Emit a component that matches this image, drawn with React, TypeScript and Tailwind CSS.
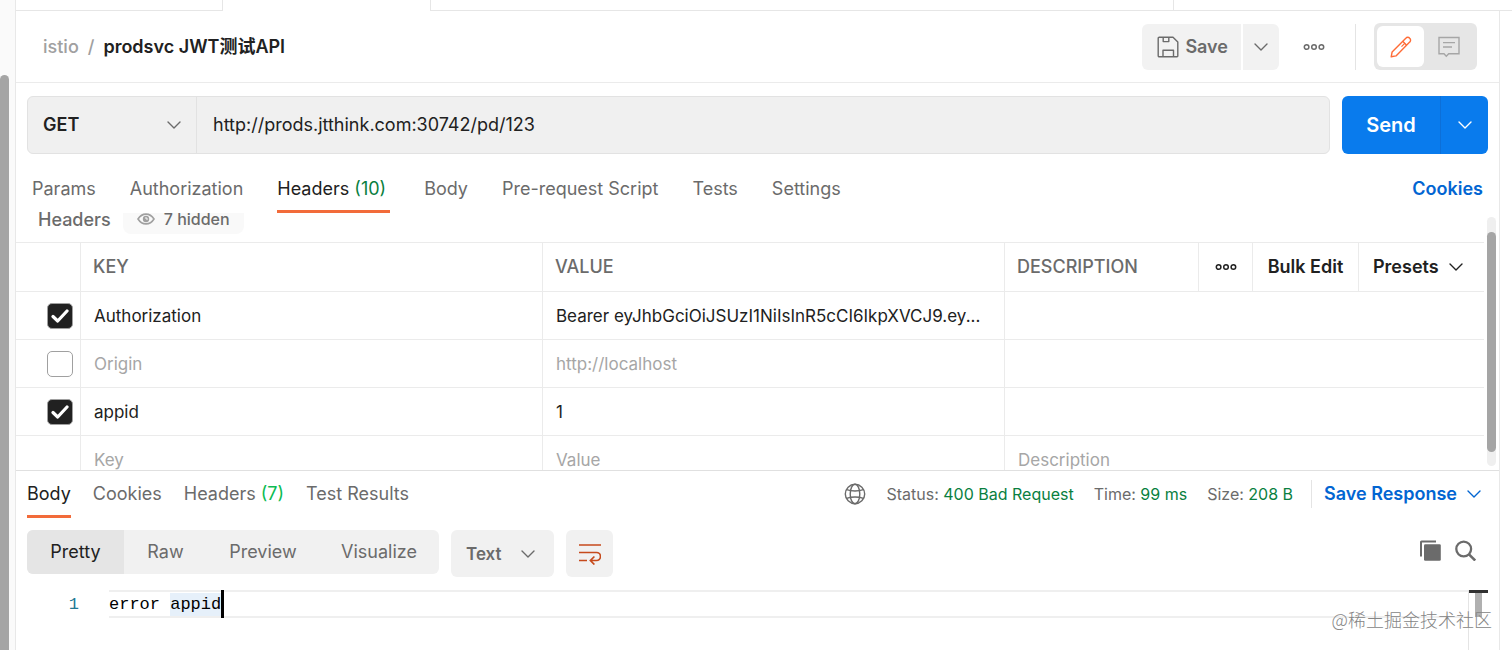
import React, { useState } from 'react';

function Chevron({ className = '' }: { className?: string }) {
  return (
    <svg viewBox="0 0 14 8" className={`h-2 w-3.5 shrink-0 ${className}`} fill="none" stroke="currentColor" strokeWidth="1.4" strokeLinecap="round" strokeLinejoin="round" aria-hidden="true">
      <path d="M1 1l6 6 6-6" />
    </svg>
  );
}

function Dots() {
  return (
    <svg viewBox="0 0 22 8" className="h-2 w-[22px]" fill="none" stroke="currentColor" strokeWidth="1.5" aria-hidden="true">
      <circle cx="3.6" cy="4" r="2.3" />
      <circle cx="11" cy="4" r="2.3" />
      <circle cx="18.4" cy="4" r="2.3" />
    </svg>
  );
}

function SaveIcon() {
  return (
    <svg viewBox="0 0 22 22" className="size-[22px]" fill="none" stroke="currentColor" strokeWidth="1.4" strokeLinejoin="round" aria-hidden="true">
      <path d="M2.200 1.200H16l4.800 4.800v14a.8.8 0 0 1-.8.8H2.200a1 1 0 0 1-1-1V2.200a1 1 0 0 1 1-1z" />
      <path d="M6.200 1.400v4.200h5.600V1.400" />
      <path d="M6 20.600V14.200h10.500v6.400" />
    </svg>
  );
}

function PencilIcon() {
  return (
    <svg viewBox="0 0 22 22" className="size-[22px]" fill="none" stroke="currentColor" strokeWidth="1.4" strokeLinejoin="round" aria-hidden="true">
      <path d="M1.200 20.800l.9-4.800L15.800 2.200a2.600 2.600 0 0 1 3.900 0 2.600 2.600 0 0 1 0 3.900L6 19.900z" />
      <path d="M12.700 5.300l3.900 3.900" />
      <path d="M15 7.200l-3.500 3.500" strokeWidth="1.200" />
    </svg>
  );
}

function CommentIcon() {
  return (
    <svg viewBox="0 0 22 22" className="size-[22px]" fill="none" stroke="currentColor" strokeWidth="1.400" aria-hidden="true">
      <path d="M1 1.500h20v16.300h-10.300L8.300 20.300 6 17.800H1z" />
      <path d="M5 6.600h12M5 11h9" />
    </svg>
  );
}

function EyeIcon() {
  return (
    <svg viewBox="0 0 18 12" className="h-3 w-[18px]" fill="none" stroke="currentColor" strokeWidth="1.600" aria-hidden="true">
      <path d="M1 6c2-3.200 4.700-4.900 8-4.900S15 2.800 17 6c-2 3.200-4.700 4.900-8 4.900S3 9.200 1 6z" />
      <circle cx="9" cy="6" r="3.200" fill="currentColor" stroke="none" />
      <path d="M9 4v2h2" stroke="#f8f8f8" strokeWidth="1" />
    </svg>
  );
}

function GlobeIcon() {
  return (
    <svg viewBox="0 0 22 22" className="size-[22px]" fill="none" stroke="currentColor" strokeWidth="1.400" aria-hidden="true">
      <circle cx="11" cy="11" r="9.700" />
      <ellipse cx="11" cy="11" rx="4.800" ry="9.700" />
      <path d="M2.500 6.600c5 1.600 12 1.600 17 0M2.500 15.400c5-1.600 12-1.600 17 0" />
    </svg>
  );
}

function WrapIcon() {
  return (
    <svg viewBox="0 0 22 22" className="size-[22px]" fill="none" stroke="currentColor" strokeWidth="1.700" aria-hidden="true">
      <path d="M0 2h22M0 9.500h17.500a4 4 0 0 1 0 8H12M0 17.500h8M15.400 13.500l-4 4 4 4" />
    </svg>
  );
}

function CopyIcon() {
  return (
    <svg viewBox="0 0 21 21" className="size-[21px]" fill="currentColor" aria-hidden="true">
      <path d="M0 2a1.500 1.500 0 0 1 1.500-1.500H16v1.900H2v14.100H0z" />
      <rect x="4" y="4.200" width="16.800" height="16.600" rx="1.300" />
    </svg>
  );
}

function SearchIcon() {
  return (
    <svg viewBox="0 0 21 21" className="size-[21px]" fill="none" stroke="currentColor" strokeWidth="2.300" aria-hidden="true">
      <circle cx="8.700" cy="9" r="7.400" />
      <path d="M14 14.300l6.200 6.200" strokeWidth="2.600" />
    </svg>
  );
}

const requestTabs = ['Params', 'Authorization', 'Headers', 'Body', 'Pre-request Script', 'Tests', 'Settings'];

const initialRows = [
  { key: 'Authorization', value: 'Bearer eyJhbGciOiJSUzI1NiIsInR5cCI6IkpXVCJ9.ey...', on: true },
  { key: 'Origin', value: 'http://localhost', on: false },
  { key: 'appid', value: '1', on: true },
];

const cell = 'h-12 border-b border-[#ebebeb] p-0';
const cellInput = 'block w-full bg-transparent px-[13px] outline-none placeholder:text-[#a6a6a6]';

function HeadersTable() {
  const [rows, setRows] = useState(initialRows);
  const toggle = (i: number) => setRows(rows.map((r, n) => (n === i ? { ...r, on: !r.on } : r)));
  return (
    <table className="w-full table-fixed border-separate border-spacing-0 text-left">
      <colgroup>
        <col className="w-[65px]" />
        <col />
        <col />
        <col className="w-[194px]" />
        <col className="w-[54px]" />
        <col className="w-[106px]" />
        <col className="w-[125px]" />
      </colgroup>
      <thead className="text-[#6b6b6b]">
        <tr>
          <th className="h-[50px] border-y border-r border-[#ebebeb]" aria-label="Enabled" />
          <th className="border-y border-r border-[#ebebeb] px-3 font-medium">KEY</th>
          <th className="border-y border-r border-[#ebebeb] px-3 font-medium">VALUE</th>
          <th className="border-y border-r border-[#ebebeb] px-3 font-medium">DESCRIPTION</th>
          <th className="border-y border-r border-[#ebebeb] p-0 text-[#212121]">
            <button className="flex w-full justify-center" aria-label="Columns"><Dots /></button>
          </th>
          <th className="border-y border-r border-[#ebebeb] p-0 text-[#212121]">
            <button className="w-full whitespace-nowrap text-center font-semibold">Bulk Edit</button>
          </th>
          <th className="border-y border-[#ebebeb] p-0 text-[#212121]">
            <button className="flex items-center gap-[10px] pl-[14px] font-semibold">Presets<Chevron /></button>
          </th>
        </tr>
      </thead>
      <tbody className="text-[17px]">
        {rows.map((row, i) => (
          <tr key={row.key} className={row.on ? 'text-[#212121]' : 'text-[#a6a6a6]'}>
            <td className={`${cell} border-r`}>
              <label className="ml-[31px] grid size-[26px] place-items-center">
                <input
                  type="checkbox"
                  checked={row.on}
                  onChange={() => toggle(i)}
                  aria-label={`Enable ${row.key}`}
                  className="col-start-1 row-start-1 size-[26px] appearance-none rounded-[5px] border border-[#a0a0a0] bg-white checked:bg-[#212121]"
                />
                {row.on && (
                  <svg viewBox="0 0 18 14" className="pointer-events-none col-start-1 row-start-1 h-3.5 w-[18px]" fill="none" stroke="#fff" strokeWidth="3.200" strokeLinecap="round" strokeLinejoin="round" aria-hidden="true">
                    <path d="M2 7.500l4.700 4.500L16 2" />
                  </svg>
                )}
              </label>
            </td>
            <td className={`${cell} border-r`}><input className={cellInput} defaultValue={row.key} aria-label="Key" /></td>
            <td className={`${cell} border-r`}><input className={cellInput} defaultValue={row.value} aria-label="Value" /></td>
            <td className={cell} colSpan={4}><input className={cellInput} aria-label="Description" /></td>
          </tr>
        ))}
        <tr>
          <td className={`${cell} border-r`} />
          <td className={`${cell} border-r`}><input className={cellInput} placeholder="Key" aria-label="New key" /></td>
          <td className={`${cell} border-r`}><input className={cellInput} placeholder="Value" aria-label="New value" /></td>
          <td className={cell} colSpan={4}><input className={cellInput} placeholder="Description" aria-label="New description" /></td>
        </tr>
      </tbody>
    </table>
  );
}

function TopBar() {
  return (
    <header className="flex h-[72px] items-center border-b border-[#ebebeb] pl-[27px] pr-[22px]">
      <div className="flex flex-1 items-center gap-[9px] font-medium">
        <a href="#istio" className="text-[#a0a0a0]">istio</a>
        <span className="text-[#a0a0a0]">/</span>
        <h1 className="font-semibold text-[#212121]">prodsvc JWT测试API</h1>
      </div>
      <div className="flex h-[46px] gap-0.5 text-[#6b6b6b]">
        <button className="flex items-center gap-[6px] rounded-l-md bg-[#f2f2f2] pl-[15px] pr-[13px] font-semibold"><SaveIcon />Save</button>
        <button className="grid w-9 place-items-center rounded-r-md bg-[#f2f2f2]" aria-label="Save options"><Chevron /></button>
      </div>
      <button className="ml-6 text-[#6b6b6b]" aria-label="More actions"><Dots /></button>
      <div className="ml-[30px] h-[46px] w-px bg-[#e4e4e4]" />
      <div className="ml-[18px] flex h-[47px] rounded-md bg-[#e6e6e6] p-[3px]">
        <button className="grid w-[47px] place-items-center rounded-md bg-white text-[#ff6c37]" aria-label="Edit"><PencilIcon /></button>
        <button className="grid w-[50px] place-items-center text-[#a6a6a6]" aria-label="Comments"><CommentIcon /></button>
      </div>
    </header>
  );
}

function UrlBar() {
  return (
    <form className="flex gap-3 px-[11px] pt-[13px]" onSubmit={(e) => e.preventDefault()}>
      <div className="flex h-[58px] min-w-0 flex-1 rounded-md border border-[#e2e2e2] bg-[#f0f0f0]">
        <div className="grid w-[169px] items-center border-r border-[#e2e2e2]">
          <select aria-label="Method" className="col-start-1 row-start-1 h-full w-full appearance-none bg-transparent pl-[15px] font-semibold text-[#212121] outline-none">
            <option>GET</option>
            <option>POST</option>
          </select>
          <Chevron className="pointer-events-none col-start-1 row-start-1 mr-[15px] justify-self-end text-[#6b6b6b]" />
        </div>
        <input aria-label="Request URL" defaultValue="http://prods.jtthink.com:30742/pd/123" className="min-w-0 flex-1 bg-transparent px-4 text-[#212121] outline-none" />
      </div>
      <div className="flex h-[58px] overflow-hidden rounded-md bg-[#097bed] text-white">
        <button type="submit" className="w-[99px] border-r border-[#0c6fd8] text-xl font-semibold">Send</button>
        <button type="button" className="grid w-[47px] place-items-center" aria-label="Send options"><Chevron /></button>
      </div>
    </form>
  );
}

function RequestTabs() {
  return (
    <nav className="flex h-[59px] items-end gap-[34px] px-4 text-[#6b6b6b]">
      {requestTabs.map((tab) =>
        tab === 'Headers' ? (
          <button key={tab} className="h-9 whitespace-nowrap border-b-3 border-[#f26b3a] pr-1 pb-[9px] text-[#212121]">
            Headers <span className="text-[#0a7f3f]">(10)</span>
          </button>
        ) : (
          <button key={tab} className="h-9 whitespace-nowrap pb-3">{tab}</button>
        ),
      )}
      <a href="#cookies" className="ml-auto h-9 font-semibold text-[#0265d2]">Cookies</a>
    </nav>
  );
}

function ResponseBar() {
  return (
    <div className="flex h-[47px] items-start pl-[11px] pr-[18px] text-[#6b6b6b]">
      <nav className="flex flex-1 gap-[22px] whitespace-nowrap">
        <button className="h-[47px] border-b-3 border-[#f26b3a] pt-0.5 text-[#212121]">Body</button>
        <button className="h-[47px] pb-px">Cookies</button>
        <button className="h-[47px] pb-px">Headers <span className="text-[#0cbb52]">(7)</span></button>
        <button className="h-[47px] pb-px">Test Results</button>
      </nav>
      <div className="flex h-[46px] items-center whitespace-nowrap">
        <button className="mr-5" aria-label="Network"><GlobeIcon /></button>
        <p className="flex gap-5 text-base">
          <span>Status: <span className="text-[#0a7f3f]">400 Bad Request</span></span>
          <span>Time: <span className="text-[#0a7f3f]">99 ms</span></span>
          <span>Size: <span className="text-[#0a7f3f]">208 B</span></span>
        </p>
        <div className="mr-3 ml-[18px] h-7 w-px bg-[#e4e4e4]" />
        <button className="flex items-center gap-[10px] font-semibold text-[#0265d2]">Save Response<Chevron /></button>
      </div>
    </div>
  );
}

function ViewBar() {
  return (
    <div className="flex items-start pl-[11px] pr-[23px] pt-3 text-[#6b6b6b]">
      <div className="flex h-11 overflow-hidden rounded-md bg-[#f1f1f1]">
        <button className="w-[97px] bg-[#e5e5e5] text-[#212121]">Pretty</button>
        <button className="w-[83px]">Raw</button>
        <button className="w-[112px]">Preview</button>
        <button className="w-[120px]">Visualize</button>
      </div>
      <button className="ml-3 flex h-[47px] w-[103px] items-center justify-between rounded-md bg-[#f1f1f1] pl-[15px] pr-[19px] text-[17px] font-semibold">Text<Chevron /></button>
      <button className="ml-3 grid h-[47px] w-[47px] place-items-center rounded-md bg-[#f1f1f1] text-[#c64a1c]" aria-label="Wrap lines"><WrapIcon /></button>
      <div className="ml-auto flex gap-[14px] pt-[10px]">
        <button aria-label="Copy"><CopyIcon /></button>
        <button aria-label="Search"><SearchIcon /></button>
      </div>
    </div>
  );
}

export default function App() {
  return (
    <div className="relative flex min-h-screen bg-white font-['Inter','Noto_Sans_CJK_SC',sans-serif] text-lg leading-6">
      <aside className="w-4 shrink-0 border-r border-[#e8e8e8] bg-[#fafafa] pt-[75px]">
        <div className="h-full w-[9px] rounded-t-full bg-[#a5a5a5]" />
      </aside>
      <div className="flex min-w-0 flex-1 flex-col">
        <div className="flex h-[11px] shrink-0">
          <div className="w-[207px] border-b border-r border-[#e6e6e6]" />
          <div className="w-[207px]" />
          <div className="flex-1 border-b border-l border-[#e6e6e6]" />
          <div className="w-[339px] border-b border-l border-[#e6e6e6]" />
        </div>
        <main className="mr-3 flex flex-1 flex-col border-r border-[#e8e8e8]">
          <TopBar />
          <UrlBar />
          <RequestTabs />
          <section className="flex border-b border-[#e0e0e0]" aria-label="Request headers">
            <div className="min-w-0 flex-1">
              <div className="flex h-[29px] items-start pl-[22px] font-medium text-[#6b6b6b]">
                <h2 className="leading-[14px]">Headers</h2>
                <button className="ml-3 flex h-[21px] items-start gap-[9px] rounded-b-lg bg-[#f9f9f9] px-[14px] text-base leading-3">
                  <span className="text-[#a0a0a0]"><EyeIcon /></span>7 hidden
                </button>
              </div>
              <div className="h-[228px] overflow-hidden">
                <HeadersTable />
              </div>
            </div>
            <div className="w-[15px] shrink-0 pl-[3px] pt-1">
              <div className="h-[249px] w-[9px] rounded-full bg-[#efefef] pt-[15px]">
                <div className="h-[220px] rounded-full bg-[#a5a5a5]" />
              </div>
            </div>
          </section>
          <ResponseBar />
          <ViewBar />
          <div className="mt-[13px] flex flex-1 pr-[11px] font-['Liberation_Mono',monospace] text-[17px]">
            <div className="w-[93px] pr-[30px] pt-[3px] text-right text-[#237893]">1</div>
            <div className="min-w-0 flex-1">
              <pre className="flex h-7 items-center border-y-2 border-[#efefef] font-['Liberation_Mono',monospace] text-black">
                <code className="pt-0.5 font-['Liberation_Mono',monospace]">error <span className="bg-[#e6f0fa] py-0.5">appid</span></code>
                <span className="h-7 w-[3px] shrink-0 bg-black" />
              </pre>
            </div>
            <div className="w-5 border-l border-[#e4e4e4]">
              <div className="h-[3px] bg-[#303030]" />
              <div className="mx-auto h-6 w-[7px] bg-[#b0b0b0]" />
            </div>
          </div>
        </main>
      </div>
      <p className="absolute right-5 bottom-[19px] font-['Noto_Sans_CJK_SC',sans-serif] text-lg leading-6 font-light text-[#858585]">@稀土掘金技术社区</p>
    </div>
  );
}
